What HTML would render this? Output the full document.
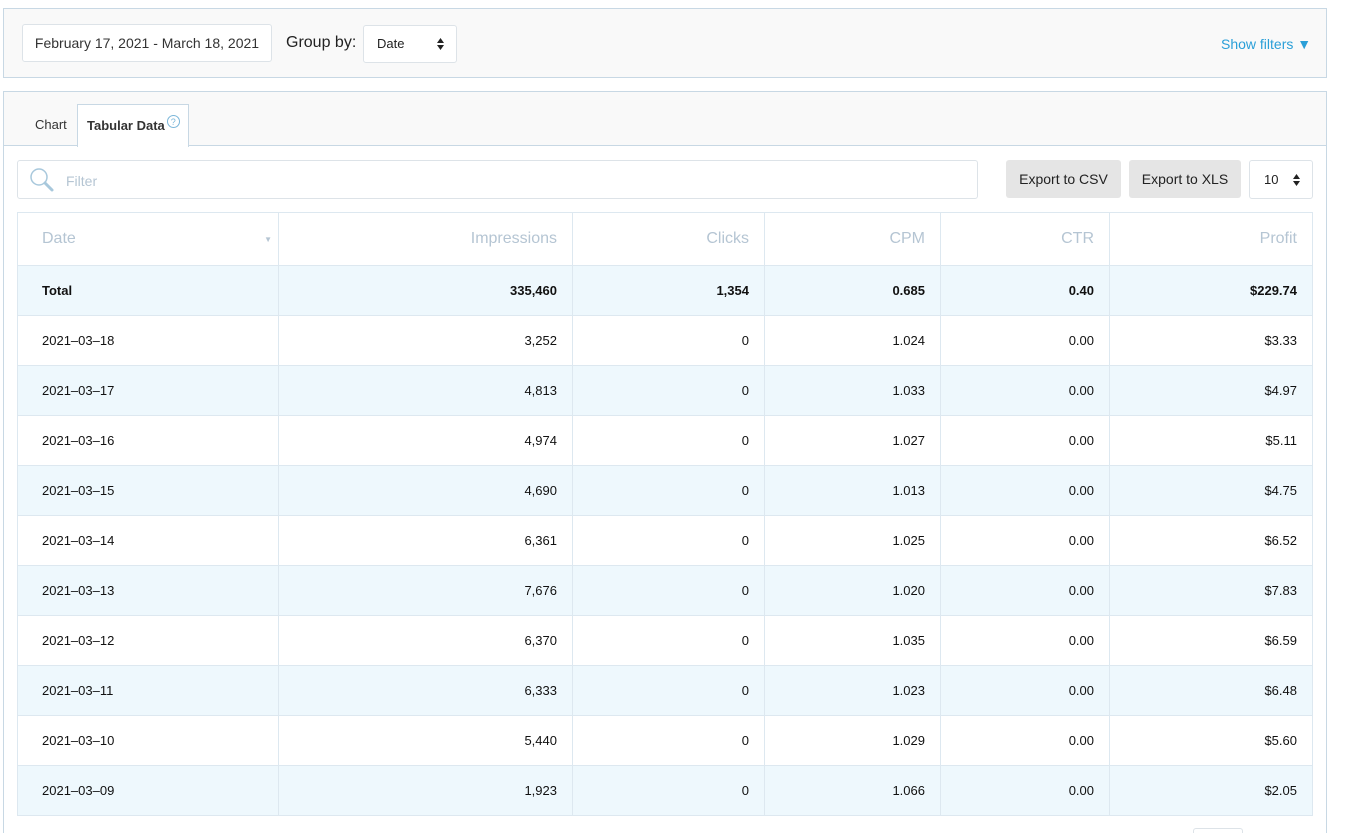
<!DOCTYPE html>
<html><head><meta charset="utf-8"><style>
*{box-sizing:border-box;margin:0;padding:0}
html{width:1364px;height:833px;overflow:hidden}
body{width:1364px;height:833px;overflow:hidden;background:#fff;font-family:"Liberation Sans",Arial,sans-serif;position:relative;color:#222}
.abs{position:absolute}
.p1{left:3px;top:8px;width:1324px;height:70px;background:#f9f9f9;border:1px solid #c8d8e4}
.date{left:22px;top:24px;width:250px;height:38px;background:#fff;border:1px solid #dde3e8;border-radius:3px;font-size:14px;color:#333;line-height:36px;text-align:center}
.gb{left:286px;top:34px;font-size:16px;color:#222}
.sel{background:#fff;border:1px solid #dde3e8;border-radius:3px;font-size:13px;color:#222}
.p2{left:3px;top:91px;width:1324px;height:742px;border:1px solid #c8d8e4;border-bottom:none;background:#fff}
.p2h{left:4px;top:92px;width:1322px;height:54px;background:#f9f9f9;border-bottom:1px solid #c8d8e4}
.tab{left:77px;top:104px;width:112px;height:43px;background:#fff;border:1px solid #c8d8e4;border-bottom:none;font-size:13px;font-weight:bold;color:#333;padding:13px 0 0 9px}
.btn{background:#e5e5e5;border-radius:3px;font-size:14px;color:#222;text-align:center;line-height:38px;height:38px;top:160px}
table{position:absolute;left:17px;top:212px;width:1296px;border-collapse:collapse;font-size:13px}
td,th{border:1px solid #dde8f0;text-align:right;padding:0 15px}
th{height:53px;font-weight:normal;font-size:16px;color:#b5c5d3}
td{height:50px;color:#111}
td:first-child,th:first-child{text-align:left;padding-left:24px}
tr.a td{background:#eef8fd}
tr.t td{font-weight:bold}
.arr{position:absolute;right:12px;top:50%;margin-top:-6px;width:7px;height:12px}
</style></head><body>
<div class="abs p1"></div>
<div class="abs date">February 17, 2021 - March 18, 2021</div>
<div class="abs gb">Group by:</div>
<div class="abs sel" style="left:363px;top:25px;width:94px;height:38px;line-height:36px;padding-left:13px">Date<svg class="arr" viewBox="0 0 7 12"><path d="M0 5L3.5 0L7 5Z M0 7L3.5 12L7 7Z" fill="#222"/></svg></div>
<div class="abs" style="left:1221px;top:36px;font-size:14px;color:#2a9fd8">Show filters ▼</div>
<div class="abs p2"></div>
<div class="abs p2h"></div>
<div class="abs" style="left:35px;top:117px;font-size:13px;color:#333">Chart</div>
<div class="abs tab">Tabular Data<span style="display:inline-block;width:13px;height:13px;border:1px solid #7bb6d9;border-radius:50%;font-size:9px;color:#7bb6d9;text-align:center;line-height:12px;font-weight:normal;vertical-align:top;margin-left:2px;margin-top:-3px">?</span></div>
<div class="abs" style="left:17px;top:160px;width:961px;height:39px;border:1px solid #dde3e8;border-radius:3px;background:#fff"></div>
<svg class="abs" style="left:28px;top:166px" width="28" height="28" viewBox="0 0 28 28"><circle cx="11" cy="11" r="8" fill="none" stroke="#a8c8dc" stroke-width="1.5"/><path d="M17 17 L24 24" stroke="#a8c8dc" stroke-width="3" stroke-linecap="round"/></svg>
<div class="abs" style="left:66px;top:173px;font-size:14px;color:#b5c5d3">Filter</div>
<div class="abs btn" style="left:1006px;width:115px">Export to CSV</div>
<div class="abs btn" style="left:1129px;width:112px">Export to XLS</div>
<div class="abs sel" style="left:1249px;top:160px;width:64px;height:39px;line-height:38px;padding-left:14px">10<svg class="arr" viewBox="0 0 7 12"><path d="M0 5L3.5 0L7 5Z M0 7L3.5 12L7 7Z" fill="#222"/></svg></div>
<table>
<tr><th style="width:261px;position:relative">Date<span style="position:absolute;right:6px;top:22px;font-size:8px">▼</span></th><th style="width:294px">Impressions</th><th style="width:192px">Clicks</th><th style="width:176px">CPM</th><th style="width:169px">CTR</th><th>Profit</th></tr>
<tr class="a t"><td>Total</td><td>335,460</td><td>1,354</td><td>0.685</td><td>0.40</td><td>$229.74</td></tr>
<tr><td>2021–03–18</td><td>3,252</td><td>0</td><td>1.024</td><td>0.00</td><td>$3.33</td></tr>
<tr class="a"><td>2021–03–17</td><td>4,813</td><td>0</td><td>1.033</td><td>0.00</td><td>$4.97</td></tr>
<tr><td>2021–03–16</td><td>4,974</td><td>0</td><td>1.027</td><td>0.00</td><td>$5.11</td></tr>
<tr class="a"><td>2021–03–15</td><td>4,690</td><td>0</td><td>1.013</td><td>0.00</td><td>$4.75</td></tr>
<tr><td>2021–03–14</td><td>6,361</td><td>0</td><td>1.025</td><td>0.00</td><td>$6.52</td></tr>
<tr class="a"><td>2021–03–13</td><td>7,676</td><td>0</td><td>1.020</td><td>0.00</td><td>$7.83</td></tr>
<tr><td>2021–03–12</td><td>6,370</td><td>0</td><td>1.035</td><td>0.00</td><td>$6.59</td></tr>
<tr class="a"><td>2021–03–11</td><td>6,333</td><td>0</td><td>1.023</td><td>0.00</td><td>$6.48</td></tr>
<tr><td>2021–03–10</td><td>5,440</td><td>0</td><td>1.029</td><td>0.00</td><td>$5.60</td></tr>
<tr class="a"><td>2021–03–09</td><td>1,923</td><td>0</td><td>1.066</td><td>0.00</td><td>$2.05</td></tr>
</table>
<div class="abs" style="left:1193px;top:828px;width:50px;height:5px;border:1px solid #dde3e8;border-bottom:none;border-radius:3px 3px 0 0"></div>
</body></html>
